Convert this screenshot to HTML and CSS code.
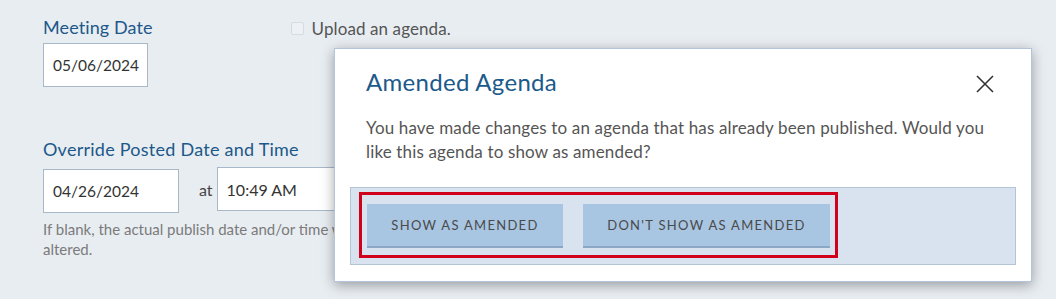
FILE: index.html
```html
<!DOCTYPE html>
<html lang="en">

<head>
    <meta charset="UTF-8">
    <meta name="viewport" content="width=device-width, initial-scale=1.0">
    <title>Meeting Agenda</title>
    <link rel="stylesheet" href="styles.css">
</head>

<body>
    <div class="page">
        <div class="row">
            <div class="field">
                <label class="field-label">Meeting Date</label>
                <div class="input date-short">05/06/2024</div>
            </div>
            <div class="upload">
                <span class="checkbox"></span>
                <span>Upload an agenda.</span>
            </div>
        </div>

        <div class="field override">
            <label class="field-label">Override Posted Date and Time</label>
            <div class="override-inputs">
                <div class="input date-long">04/26/2024</div>
                <span class="at">at</span>
                <div class="input time">10:49 AM</div>
            </div>
            <p class="help">If blank, the actual publish date and/or time will not be altered.</p>
        </div>
    </div>

    <div class="modal">
        <div class="modal-header">
            <h2 class="modal-title">Amended Agenda</h2>
            <button class="close" aria-label="Close">
                <svg width="18" height="18" viewBox="0 0 18 18">
                    <path d="M1 1 L17 17 M17 1 L1 17" stroke="#333" stroke-width="1.6" fill="none" />
                </svg>
            </button>
        </div>
        <p class="modal-body">You have made changes to an agenda that has already been published. Would you like this agenda to show as amended?</p>
        <div class="modal-footer">
            <div class="highlight">
                <button class="btn btn-show">Show as amended</button>
                <button class="btn btn-dont">Don't show as amended</button>
            </div>
        </div>
    </div>
</body>

</html>
```

FILE: styles.css
```css
*,
*::before,
*::after {
    box-sizing: border-box;
}

body {
    margin: 0;
    padding: 0;
    background: #e8edf2;
    font-family: Lato, "Open Sans", sans-serif;
    color: #444;
    height: 299px;
    overflow: hidden;
    position: relative;
}

.page {
    padding: 15px 0 0 43px;
}

.row {
    display: flex;
    align-items: flex-start;
}

.field-label {
    display: block;
    color: #1c5889;
    font-size: 18px;
    letter-spacing: 0.1px;
    line-height: 24px;
    margin-bottom: 4px;
}

.input {
    background: #fff;
    border: 1px solid #a9b8c9;
    height: 44px;
    font-size: 15.5px;
    color: #333;
    padding: 0 9px;
    display: flex;
    align-items: center;
}

.date-short {
    width: 105px;
}

.upload {
    display: flex;
    align-items: center;
    gap: 8px;
    margin-left: 138px;
    margin-top: 3px;
    font-size: 17px;
    letter-spacing: 0.1px;
    color: #555;
}

.checkbox {
    width: 13px;
    height: 13px;
    border: 1px solid #d6dbe0;
    border-radius: 2px;
    background: #eef1f4;
}

.override {
    margin-top: 50px;
}

.override .field-label {
    letter-spacing: 0.25px;
    margin-bottom: 8px;
}

.override-inputs {
    display: flex;
    align-items: flex-start;
}

.date-long {
    width: 136px;
}

.at {
    font-size: 16px;
    color: #444;
    margin: 11px 4px 0 20px;
}

.time {
    width: 130px;
    margin-top: -2px;
    font-size: 16px;
}

.help {
    margin: 6px 0 0;
    width: 380px;
    font-size: 15px;
    line-height: 20px;
    color: #7b7b7b;
}

/* modal */
.modal {
    position: absolute;
    left: 334px;
    top: 48px;
    width: 698px;
    background: #fff;
    border: 1px solid #b3c5da;
    box-shadow: 0 3px 12px rgba(0, 0, 0, 0.35);
    padding: 0 15px 16px;
}

.modal-header {
    display: flex;
    justify-content: space-between;
    align-items: center;
    padding: 19px 16px 0 16px;
}

.modal-title {
    margin: 0;
    font-size: 24px;
    letter-spacing: 0.3px;
    font-weight: normal;
    color: #1b5a8b;
    line-height: 28px;
}

.close {
    border: none;
    background: none;
    padding: 0;
    margin-right: 6px;
    margin-top: 4px;
    cursor: pointer;
}

.close svg {
    display: block;
}

.modal-body {
    margin: 20px 16px 23px;
    font-size: 17px;
    letter-spacing: 0.15px;
    line-height: 24px;
    color: #555;
    width: 630px;
}

.modal-footer {
    background: #d9e3ef;
    border: 1px solid #b4c4d7;
    padding: 4px 8px 5px;
    height: 78px;
}

.highlight {
    display: inline-flex;
    gap: 20px;
    border: 3px solid #d0021b;
    padding: 9px 5px 7px;
}

.btn {
    background: #a8c5e2;
    border: none;
    border-bottom: 2px solid #8ba7c5;
    height: 44px;
    padding: 0 20px;
    font-family: Lato, "Open Sans", sans-serif;
    font-size: 13px;
    letter-spacing: 1.3px;
    text-transform: uppercase;
    color: #4a4a4a;
    cursor: pointer;
}

.btn-show {
    width: 196px;
}

.btn-dont {
    width: 247px;
}
```
